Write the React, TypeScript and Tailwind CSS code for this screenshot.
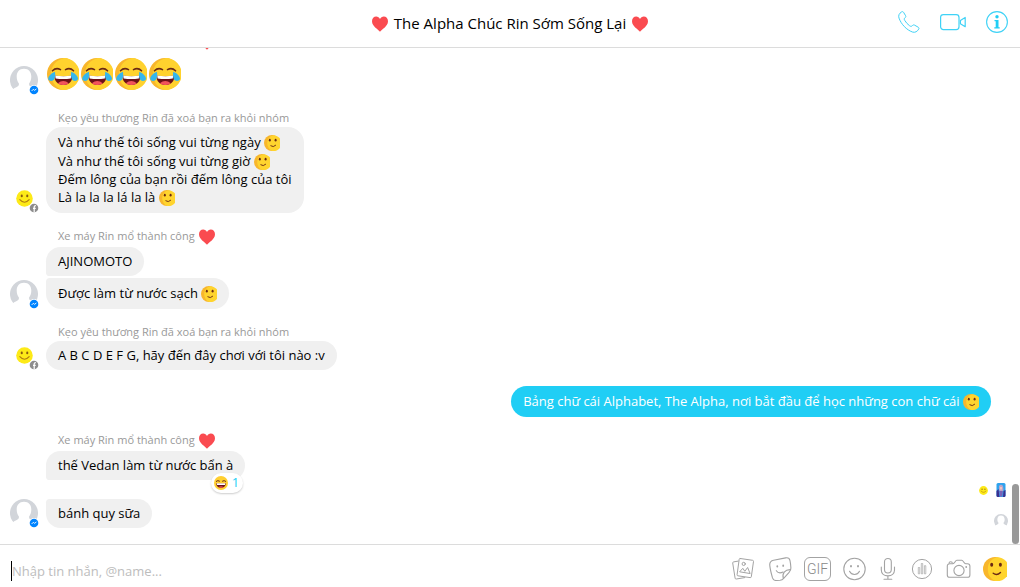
import type { ReactNode } from "react";

const SMILE = "smile";

type Line = { text: string; emoji?: string };

type Message = {
  lines: Line[];
  reaction?: number;
  seenBy?: string[];
};

type Group = {
  name: string;
  heart?: boolean;
  avatar: "ghost" | "smiley";
  messages: Message[];
};

const before: Group[] = [
  {
    name: "Kẹo yêu thương Rin đã xoá bạn ra khỏi nhóm",
    avatar: "smiley",
    messages: [
      {
        lines: [
          { text: "Và như thế tôi sống vui từng ngày", emoji: SMILE },
          { text: "Và như thế tôi sống vui từng giờ", emoji: SMILE },
          { text: "Đếm lông của bạn rồi đếm lông của tôi" },
          { text: "Là la la la lá la là", emoji: SMILE },
        ],
      },
    ],
  },
  {
    name: "Xe máy Rin mổ thành công",
    heart: true,
    avatar: "ghost",
    messages: [
      { lines: [{ text: "AJINOMOTO" }] },
      { lines: [{ text: "Được làm từ nước sạch", emoji: SMILE }] },
    ],
  },
  {
    name: "Kẹo yêu thương Rin đã xoá bạn ra khỏi nhóm",
    avatar: "smiley",
    messages: [{ lines: [{ text: "A B C D E F G, hãy đến đây chơi với tôi nào :v" }] }],
  },
];

const after: Group[] = [
  {
    name: "Xe máy Rin mổ thành công",
    heart: true,
    avatar: "ghost",
    messages: [
      {
        lines: [{ text: "thế Vedan làm từ nước bẩn à" }],
        reaction: 1,
        seenBy: ["smiley", "photo"],
      },
      { lines: [{ text: "bánh quy sữa" }], seenBy: ["ghost"] },
    ],
  },
];

function Heart({ className = "" }: { className?: string }) {
  return (
    <svg viewBox="0 0 16 16" className={`inline-block h-4 w-4 shrink-0 ${className}`} aria-hidden>
      <path
        d="M8 15.8C6.6 13.4 0 10.6 0 5.2 0 2.4 1.9.5 4.2.5 5.9.5 7.3 1.4 8 2.9 8.7 1.4 10.1.5 11.8.5 14.1.5 16 2.4 16 5.2c0 5.4-6.6 8.2-8 10.6z"
        fill="#fa4b50"
      />
    </svg>
  );
}

function Smile({ className = "h-4 w-4" }: { className?: string }) {
  return (
    <svg viewBox="0 0 24 24" className={`inline-block ${className}`} aria-hidden>
      <circle cx="12" cy="12" r="12" fill="#f8b62c" />
      <path d="M14 .2A12 12 0 1 1 12 24C7.5 22 4.8 17.500 4.800 12 4.800 6 8.500 1.500 14 .2z" fill="#ffd42e" />
      <ellipse cx="8.700" cy="7.800" rx="1.500" ry="2" fill="#6b2a14" />
      <ellipse cx="17.400" cy="7.800" rx="1.500" ry="2" fill="#6b2a14" />
      <path d="M10.200 16.300q3.700 2.900 7.300-.8" fill="none" stroke="#6b2a14" strokeWidth="1.400" strokeLinecap="round" />
    </svg>
  );
}

function Joy() {
  return (
    <svg viewBox="0 0 32 32" className="h-8 w-8" aria-hidden>
      <circle cx="16" cy="16" r="16" fill="#f8b62c" />
      <path d="M17 0a16 16 0 1 1-2 31.900C8 29 4 23 4 16 4 8 9 2 17 0z" fill="#ffd22e" />
      <path d="M5.500 12.800q3.500-3.600 8-1.200M18.500 11.600q4.500-2.400 8 1.200" fill="none" stroke="#6b2a14" strokeWidth="1.600" strokeLinecap="round" />
      <path d="M7.500 17.500q9 1.400 17.500 0c1 5.500-3 9.600-8.500 9.600S7 23 7.500 17.500z" fill="#6d1117" />
      <path d="M8.200 17.600q8.400 1.200 16 0l-.4 2.800q-7.500 1.200-15.200 0z" fill="#fff" />
      <path d="M10.800 25.200q5.500-4.200 11 0-2.300 1.900-5.500 1.900t-5.500-1.900z" fill="#f2545b" />
      <path d="M7.900 13.800c.9 4.800-.3 9.200-3.600 9.200-4.800 0-4.300-5.800 3.600-9.200zM24.300 13.800c-.9 4.800.3 9.200 3.600 9.200 4.800 0 4.300-5.800-3.600-9.200z" fill="#35b6ec" />
    </svg>
  );
}

function Grin() {
  return (
    <svg viewBox="0 0 14 14" className="h-3.5 w-3.5" aria-hidden>
      <circle cx="7" cy="7" r="7" fill="#ffcf30" />
      <path d="M2.300 5.300q1.500-1.500 3.200-.2M8.500 5.100q1.700-1.300 3.200.2" fill="none" stroke="#6b2a14" strokeWidth="1" strokeLinecap="round" />
      <path d="M2.200 7.300h9.600c.2 2.600-2 4.600-4.800 4.600s-5-2-4.800-4.600z" fill="#6d1117" />
      <path d="M2.600 7.300h8.800L11 8.900H3z" fill="#fff" />
      <path d="M4.500 10.900q2.500-1.500 5 0-2.500 1.700-5 0z" fill="#f2545b" />
    </svg>
  );
}

function Ghost({ className = "h-7 w-7" }: { className?: string }) {
  return (
    <svg viewBox="0 0 28 28" className={className} aria-hidden>
      <path d="M6 25.500A14 14 0 1 1 22 25.500z" fill="#d2d5da" />
      <path
        d="M14 2.800c4.800 0 7.400 3.300 7.300 8 0 3-1 5.300-2.300 6.900.1 2.200 1.100 2.800 3.200 3.700 1.700.7 3 1.500 3.400 3l.1 3.500H2.300l.1-3.500c.4-1.500 1.700-2.300 3.400-3 2.100-.9 3.100-1.500 3.200-3.700-1.300-1.600-2.300-3.900-2.300-6.900-.1-4.700 2.500-8 7.300-8z"
        fill="#fff"
      />
    </svg>
  );
}

function FlatSmiley({ className }: { className: string }) {
  return (
    <svg viewBox="0 0 16 16" className={className} aria-hidden>
      <circle cx="8" cy="8" r="7.800" fill="#fdea18" />
      <ellipse cx="5.400" cy="5.600" rx="1" ry="1.300" fill="#8a5a10" />
      <ellipse cx="10.600" cy="5.600" rx="1" ry="1.300" fill="#8a5a10" />
      <path d="M3.600 9q4.400 5 8.800 0" fill="none" stroke="#b07a12" strokeWidth="1" strokeLinecap="round" />
    </svg>
  );
}

function Avatar({ kind }: { kind: "ghost" | "smiley" }) {
  return (
    <div className="relative mb-px flex h-7 w-7 shrink-0 items-center justify-center">
      {kind === "ghost" ? <Ghost /> : <FlatSmiley className="h-[17px] w-[17px]" />}
      {kind === "ghost" ? (
        <svg viewBox="0 0 10 10" className="absolute -right-px -bottom-px h-2.5 w-2.5" aria-hidden>
          <circle cx="5" cy="5" r="5" fill="#fff" />
          <circle cx="5" cy="5" r="4.300" fill="#0084ff" />
          <path d="M2.600 6l1.700-1.700 1.200 1L7.400 4" fill="none" stroke="#fff" strokeWidth=".9" />
        </svg>
      ) : (
        <svg viewBox="0 0 10 10" className="absolute -right-px -bottom-px h-2.5 w-2.5" aria-hidden>
          <circle cx="5" cy="5" r="5" fill="#fff" />
          <circle cx="5" cy="5" r="4.300" fill="#8d8d8d" />
          <path d="M5.200 9.200V4.100q0-1.500 1.700-1.400M4 5.300h2.700" fill="none" stroke="#fff" strokeWidth="1.200" />
        </svg>
      )}
    </div>
  );
}

function SeenHead({ kind }: { kind: string }) {
  if (kind === "ghost") return <Ghost className="h-3.5 w-3.5" />;
  if (kind === "smiley") {
    return (
      <span className="flex h-3.5 w-3.5 items-center justify-center">
        <FlatSmiley className="h-[9px] w-[9px]" />
      </span>
    );
  }
  return (
    <svg viewBox="0 0 14 14" className="h-3.5 w-3.5" aria-hidden>
      <rect x="2.500" width="9" height="14" rx="1.500" fill="#2fa3ee" />
      <path d="M2.500 8l2-2 1 8h-1.500q-1.500 0-1.500-1.500zM11.500 7l-2 1-.5 6h1q1.500 0 1.500-1.500z" fill="#3a2f8f" />
      <path d="M5 3q2-2.500 4 0l.5 4-2 3-2.500-3z" fill="#b9a5c9" />
      <path d="M5.200 8h3.600l-.5 5.500H6z" fill="#7a62b8" />
      <path d="M6 4h2v2.500H6z" fill="#f3c3bd" />
    </svg>
  );
}

function TextLine({ line }: { line: Line }) {
  return (
    <p className={line.emoji ? "leading-[19px]" : "leading-[17px]"}>
      {line.text}
      {line.emoji && (
        <>
          {" "}
          <Smile className="h-4 w-4 align-[-4px]" />
        </>
      )}
    </p>
  );
}

function SenderName({ name, heart }: { name: string; heart?: boolean }) {
  return (
    <div className={`ml-[58px] flex items-center gap-1 text-[11px] text-[#999] ${heart ? "h-[19px] pb-0.5" : "h-[17px]"}`}>
      {name}
      {heart && <Heart />}
    </div>
  );
}

function MessageGroup({ group }: { group: Group }) {
  const last = group.messages.length - 1;
  return (
    <section className="mt-[15px]">
      <SenderName name={group.name} heart={group.heart} />
      <div className="flex flex-col gap-0.5">
        {group.messages.map((message, i) => (
          <div key={i} className="flex items-end gap-2 pr-3 pl-2.5">
            {i === last ? <Avatar kind={group.avatar} /> : <span className="w-7 shrink-0" />}
            <div className={message.reaction ? "pb-[17px]" : ""}>
              <div
                className={`relative rounded-r-2xl bg-[#f0f0f0] px-3 py-1.5 ${i === 0 ? "rounded-tl-2xl" : "rounded-tl"} ${i === last ? "rounded-bl-2xl" : "rounded-bl"}`}
              >
                {message.lines.map((line) => (
                  <TextLine key={line.text} line={line} />
                ))}
                {message.reaction && (
                  <button className="absolute right-0.5 -bottom-[13px] flex h-5 w-8 items-center justify-between rounded-full bg-white pr-1 pl-[3px] text-[13px] text-[#20cef5] shadow-[0_1px_2px_rgba(0,0,0,0.2)]">
                    <Grin />
                    {message.reaction}
                  </button>
                )}
              </div>
            </div>
            <div className="ml-auto flex gap-1">
              {message.seenBy?.map((kind) => <SeenHead key={kind} kind={kind} />)}
            </div>
          </div>
        ))}
      </div>
    </section>
  );
}

function IconButton({ label, className, children }: { label: string; className: string; children: ReactNode }) {
  return (
    <button aria-label={label} className={`h-6 shrink-0 ${className}`}>
      {children}
    </button>
  );
}

function Header() {
  return (
    <header className="grid h-12 shrink-0 grid-cols-[1fr_auto_1fr] items-center border-b border-[#dcdcdc] bg-white">
      <span />
      <h1 className="flex items-center gap-1.5 text-[15px] font-medium text-black">
        <Heart />
        The Alpha Chúc Rin Sớm Sống Lại
        <Heart />
      </h1>
      <nav className="flex items-center justify-end gap-5 pr-3 pb-1 text-[#3fd2f6]">
        <IconButton label="Call" className="w-[22px]">
          <svg viewBox="0 0 22 24" className="h-6 w-[22px]" fill="none" stroke="currentColor" strokeWidth="1" strokeLinejoin="round">
            <path d="M3.600 1.900c.8-.5 1.500-.3 2 .5l2 3.300c.4.700.2 1.400-.4 1.900-1.200 1-1.200 1.700-.4 2.900 1.400 2.200 2.700 3.700 4.700 5.200 1.200.9 2 .9 3-.2.600-.6 1.300-.8 2-.4l3.700 2.100c.8.500 1 1.200.5 1.900-1.300 2.400-3.600 3.700-6 3C8.500 20 3.200 14.200 1 8.100.2 5.500 1 3.500 3.600 1.900z" />
          </svg>
        </IconButton>
        <IconButton label="Video call" className="w-[26px]">
          <svg viewBox="0 0 26 24" className="h-6 w-[26px]" fill="none" stroke="currentColor" strokeWidth="1.200" strokeLinejoin="round">
            <rect x=".6" y="4.600" width="18.400" height="15" rx="2.800" />
            <path d="M20.400 10.500l4.800-3v9.200l-4.800-3z" />
          </svg>
        </IconButton>
        <IconButton label="Conversation information" className="w-[22px]">
          <svg viewBox="0 0 22 24" className="h-6 w-[22px]" fill="none" stroke="currentColor">
            <circle cx="11" cy="12" r="10.400" strokeWidth="1.100" />
            <circle cx="11" cy="6.800" r="1.700" fill="#20cef5" stroke="none" />
            <path d="M8.500 10h4v7.200h1.200v1.300H8.300v-1.300h1.400v-6H8.500z" fill="#20cef5" stroke="none" />
          </svg>
        </IconButton>
      </nav>
    </header>
  );
}

function Composer() {
  return (
    <footer className="flex shrink-0 items-start gap-3 border-t border-[#dcdcdc] bg-white pt-3 pr-[13px] pb-1.5 pl-[11px] text-[#a3a3a3]">
      <input
        aria-label="Message"
        placeholder="Nhập tin nhắn, @name..."
        className="mt-1 h-5 min-w-0 flex-1 border-l border-black text-[13px] text-black outline-none placeholder:text-[#bdbdbd]"
      />
      <IconButton label="Photos" className="w-[25px]">
        <svg viewBox="0 0 25 24" className="h-6 w-[25px]" fill="none" stroke="currentColor" strokeWidth="1" strokeLinejoin="round" strokeLinecap="round">
          <path d="M8.300 1.500l12.300 1.800q1 .2.900 1.200l-2.200 15.300q-.2 1-1.200.8L5.900 18.800q-1-.2-.8-1.200L7.200 2.300q.2-1 1.100-.8z" />
          <path d="M6.200 4.100l-4.600.8q-1 .2-.9 1.100l2.400 15.200q.2 1 1.200.8l8.500-1.400" />
          <circle cx="11.700" cy="6.900" r="1.600" />
          <path d="M7.900 14.500l2.900-3.200 2 3 2.800-3.800 2.400 5.700z" />
        </svg>
      </IconButton>
      <IconButton label="Stickers" className="w-[23px]">
        <svg viewBox="0 0 23 24" className="h-6 w-[23px]" fill="none" stroke="currentColor" strokeWidth="1.100" strokeLinejoin="round" strokeLinecap="round">
          <path d="M4.600 3.200l12-2.300c2.500-.5 3.900.5 4.400 2.700.5 2.300.8 4.900.9 7.500 0 1.700-.6 2.900-1.800 4.200l-5.400 6c-1 1.100-2 1.700-3.600 1.900l-4 .3c-2 .1-3-.7-3.600-2.600C2.400 17 1.200 12.500.8 8.600.4 5.300 1.500 3.800 4.600 3.200z" />
          <path d="M14.400 21.500c-.8-2.300-.5-4.700.8-6.400 1.500-1.800 3.900-2.600 6.400-2.500" />
          <path d="M7.300 13.700c1.400 2 4 2.700 6.700 1.300" />
          <path d="M8.300 9.200v.4M14.200 8.500v.4" strokeWidth="1.800" />
        </svg>
      </IconButton>
      <IconButton label="GIF" className="w-[27px]">
        <span className="flex h-6 w-[27px] items-center justify-center rounded-md border border-[#a3a3a3] font-['Roboto',sans-serif] text-[14px] font-light text-[#888]">
          GIF
        </span>
      </IconButton>
      <IconButton label="Emoji" className="w-[23px]">
        <svg viewBox="0 0 23 24" className="h-6 w-[23px]" fill="none" stroke="currentColor" strokeWidth="1.100" strokeLinecap="round">
          <circle cx="11.500" cy="12" r="10.700" />
          <path d="M6.500 14.300c2.200 4.300 7.800 4.300 10 0" />
          <path d="M8 9v.4M15 9v.4" strokeWidth="1.900" />
        </svg>
      </IconButton>
      <IconButton label="Voice message" className="w-5">
        <svg viewBox="0 0 20 24" className="h-6 w-5" fill="none" stroke="currentColor" strokeWidth="1.100" strokeLinecap="round">
          <rect x="6.500" y="1.500" width="6.800" height="14.500" rx="3.400" />
          <path d="M3.300 10v3c0 3.600 2.900 5.900 6.600 5.900s6.600-2.300 6.600-5.900v-3M9.900 19v3M6 22.300h7.800" />
        </svg>
      </IconButton>
      <IconButton label="Poll" className="w-6">
        <svg viewBox="0 0 24 24" className="h-6 w-6" fill="none" stroke="currentColor" strokeWidth="1">
          <circle cx="12" cy="12" r="9.600" />
          <path d="M8.300 10.500h1.400v6.300H8.300zM11.300 6.500h1.400v10.300h-1.400zM14.400 8.700h1.400v8.100h-1.400z" strokeWidth=".7" />
        </svg>
      </IconButton>
      <IconButton label="Camera" className="w-[25px]">
        <svg viewBox="0 0 25 24" className="h-6 w-[25px]" fill="none" stroke="currentColor" strokeWidth="1.100" strokeLinejoin="round">
          <path d="M3.700 6.700h3.200c1.800 0 2.300-3.400 4-3.400h4.800c1.700 0 2.200 3.400 4 3.400h1.800c1.500 0 2.400.9 2.400 2.400v8.800c0 1.500-.9 2.400-2.400 2.400H3.700c-1.500 0-2.400-.9-2.400-2.400V9.100c0-1.500.9-2.400 2.400-2.400z" />
          <circle cx="13" cy="13.500" r="5.100" />
          <path d="M3 6.500q0-1.800 1.700-1.800t1.700 1.800" />
          <circle cx="20.200" cy="10" r=".9" fill="currentColor" stroke="none" />
        </svg>
      </IconButton>
      <IconButton label="Send smile" className="w-6">
        <Smile className="h-6 w-6" />
      </IconButton>
    </footer>
  );
}

export default function App() {
  return (
    <div className="flex h-screen flex-col bg-white font-['Open_Sans','Noto_Sans',sans-serif] text-[13px] text-black">
      <Header />
      <main className="relative flex min-h-0 flex-1 flex-col justify-end overflow-hidden pb-4">
        <Heart className="ml-[199px]" />
        <div className="flex items-end gap-[9px] pt-2 pl-2.5">
          <Avatar kind="ghost" />
          <div className="flex gap-0.5 pb-[5px]">
            <Joy />
            <Joy />
            <Joy />
            <Joy />
          </div>
        </div>
        {before.map((group, i) => (
          <MessageGroup key={i} group={group} />
        ))}
        <div className="mt-4 mr-[29px] self-end rounded-2xl bg-[#20cef5] px-3 py-1.5 text-white">
          <TextLine
            line={{
              text: "Bảng chữ cái Alphabet, The Alpha, nơi bắt đầu để học những con chữ cái",
              emoji: SMILE,
            }}
          />
        </div>
        {after.map((group, i) => (
          <MessageGroup key={i} group={group} />
        ))}
        <div className="absolute right-px bottom-0 h-[60px] w-[7px] rounded-full bg-[#999]" />
      </main>
      <Composer />
    </div>
  );
}
